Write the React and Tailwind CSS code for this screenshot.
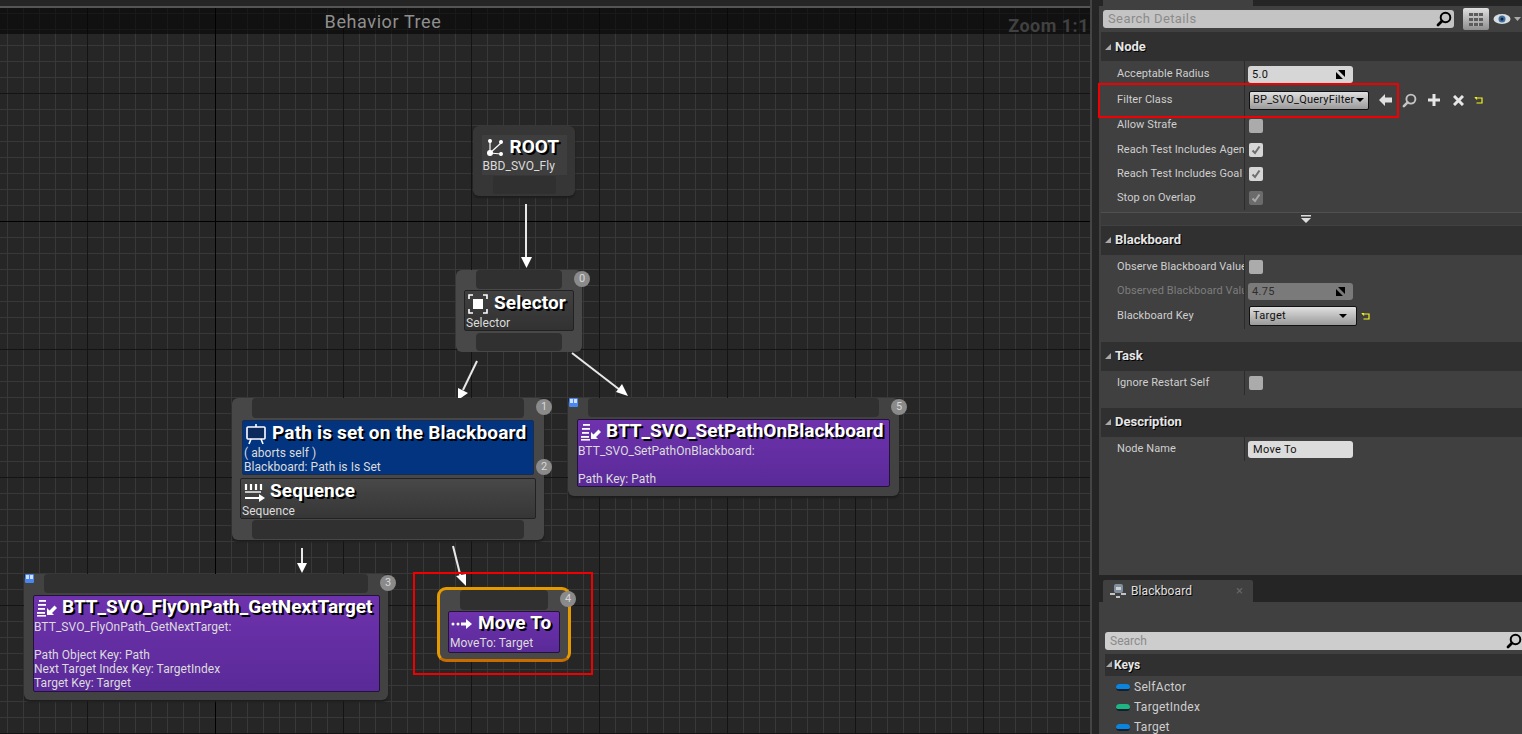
function Badge({ n, className }) {
  return (
    <div className={`absolute z-10 w-4 h-4 rounded-full bg-[#8a8a8a] text-[#d8d8d8] text-[11px] leading-4 text-center ${className}`}>
      {n}
    </div>
  )
}

function Title({ children, className = '' }) {
  return (
    <span className={`relative font-bold text-[19px] leading-[22px] text-white whitespace-nowrap [text-shadow:2px_2px_0_#000] ${className}`}>
      {children}
    </span>
  )
}

function Sub({ children }) {
  return <div className="text-[12px] leading-[14px] tracking-[0.05px] text-[#dcdcdc] whitespace-nowrap">{children}</div>
}

const SaveIcon = ({ className }) => (
  <svg className={`absolute ${className}`} width="9" height="9" viewBox="0 0 9 9">
    <rect width="9" height="9" rx="1" fill="#4a86f0" />
    <rect x="1" y="1" width="3" height="4" fill="#cfe0ff" />
    <rect x="5" y="1" width="3" height="4" fill="#cfe0ff" />
  </svg>
)

const RootIcon = () => (
  <svg width="18" height="18" viewBox="0 0 18 18" fill="white" stroke="white" strokeWidth="1.2">
    <line x1="4" y1="3" x2="4" y2="15" />
    <line x1="4" y1="15" x2="15" y2="5" />
    <line x1="4" y1="15" x2="15" y2="16" />
    <circle cx="4" cy="3" r="1.4" />
    <circle cx="4" cy="15" r="2.4" />
    <circle cx="15" cy="4" r="1.4" />
    <circle cx="15" cy="16" r="1.4" />
  </svg>
)

const SelectorIcon = () => (
  <svg width="20" height="20" viewBox="0 0 20 20" fill="none" stroke="white" strokeWidth="1.6">
    <rect x="5" y="5" width="10" height="10" fill="white" stroke="none" />
    <path d="M1 5V1h4M15 1h4v4M19 15v4h-4M5 19H1v-4" />
  </svg>
)

const DecoratorIcon = () => (
  <svg width="22" height="22" viewBox="0 0 22 22" fill="#0c2a5c" stroke="white" strokeWidth="1.6">
    <rect x="2" y="4" width="18" height="12" rx="1" />
    <path d="M11 1v3M6 16l-2 5M16 16l2 5" fill="none" />
  </svg>
)

const SequenceIcon = () => (
  <svg width="22" height="20" viewBox="0 0 22 20" fill="white" stroke="white">
    <path d="M2 2v6M7 2v6M12 2v6M17 2v6" strokeWidth="2.2" fill="none" />
    <path d="M1 10h16" strokeWidth="1.4" fill="none" />
    <path d="M1 15h14v-3l6 4-6 4v-3H1z" stroke="none" />
  </svg>
)

const TaskIcon = () => (
  <svg width="22" height="18" viewBox="0 0 22 18" fill="white">
    <rect x="3" y="1" width="7" height="1.8" />
    <rect x="2" y="5" width="8" height="1.8" />
    <rect x="2" y="9" width="7" height="1.8" />
    <rect x="1" y="13" width="8" height="1.8" />
    <rect x="1" y="16" width="9" height="1.6" />
    <path d="M11 16V9l2.500 2.500L18.500 6.500 21 9l-5 5 2 2z" />
  </svg>
)

const MoveIcon = () => (
  <svg width="22" height="12" viewBox="0 0 22 12" fill="white">
    <circle cx="2" cy="6" r="1.5" />
    <circle cx="7" cy="6" r="1.5" />
    <rect x="10" y="4.500" width="6" height="3" />
    <path d="M15 1l6 5-6 5z" />
  </svg>
)

const SearchIcon = ({ color = '#000', size = 16 }) => (
  <svg width={size} height={size} viewBox="0 0 16 16" fill="none" stroke={color}>
    <circle cx="9.500" cy="6.500" r="4.800" strokeWidth="2" />
    <path d="M6 10l-4 4" strokeWidth="2.800" strokeLinecap="round" />
  </svg>
)

const ResetIcon = () => (
  <svg width="9" height="9" viewBox="0 0 9 9" fill="none" stroke="#f4f41e" strokeWidth="1.200">
    <path d="M3 1.500H1.500L3 3.500" />
    <path d="M1.500 2H8v5H2.500" />
  </svg>
)

const ResizeIcon = () => (
  <svg className="absolute right-[8px] top-[4px]" width="9" height="9" viewBox="0 0 9 9" fill="#000">
    <path d="M2 0h7v7zM0 2v7h7z" />
  </svg>
)

function Caret() {
  return <div className="w-0 h-0 border-l-[4px] border-r-[4px] border-t-[4px] border-l-transparent border-r-transparent border-t-black" />
}

function Check({ state }) {
  if (state === 'off') return <div className="w-[14px] h-[14px] ml-px rounded-[2px] bg-[#ababab]" />
  const dis = state === 'disabled'
  return (
    <div className={`w-[14px] h-[14px] ml-px rounded-[2px] flex items-center justify-center ${dis ? 'bg-[#6b6b6b]' : 'bg-[#d6d6d6]'}`}>
      <svg width="10" height="10" viewBox="0 0 10 10" fill="none" stroke={dis ? '#a8a8a8' : '#6e6e6e'} strokeWidth="2">
        <path d="M1.500 5.500l2.500 2.500L8.500 1.500" />
      </svg>
    </div>
  )
}

function Row({ label, h = 'h-6', dim, children }) {
  return (
    <div className={`flex items-center ${h}`}>
      <div className={`w-[144px] pl-[16px] shrink-0 overflow-hidden whitespace-nowrap text-[11px] tracking-[0.08px] border-r border-[#2c2c2c] h-full flex items-center ${dim ? 'text-[#7d7d7d]' : 'text-[#cfcfcf]'}`}>
        {label}
      </div>
      <div className="pl-[3px] flex items-center">{children}</div>
    </div>
  )
}

function SectionHead({ title, pb = 'pb-[2px]' }) {
  return (
    <div className={`h-[29px] bg-[#303030] flex items-center ${pb}`}>
      <div className="w-0 h-0 ml-[4px] mr-[4px] mt-[1px] border-b-[6px] border-l-[6px] border-b-[#a8a8a8] border-l-transparent" />
      <span className="text-[13px] font-bold text-[#e6e6e6] [text-shadow:1px_1px_0_#000]">{title}</span>
      <div className="ml-auto" />
    </div>
  )
}

function NumberBox({ value, dim }) {
  return (
    <div className={`relative w-[105px] h-[17px] rounded-[3px] text-[11px] leading-[17px] pl-[4px] tracking-[0.3px] ${dim ? 'bg-[#7a7a7a] text-[#2e2e2e]' : 'bg-[#d6d6d6] text-[#111]'}`}>
      {value}
      <ResizeIcon />
    </div>
  )
}

function KeyRow({ label, color }) {
  return (
    <div className="h-5 flex items-center pl-[11px] gap-[4px] text-[12px] tracking-[0.3px] text-[#cfcfcf]">
      <div className={`w-[14px] h-[7px] rounded-full border-b-2 border-[#10202c] ${color}`} />
      {label}
    </div>
  )
}

function NodeSection() {
  return (
    <div className="ml-[2px]">
      <SectionHead title="Node" pb="" />
      <Row label="Acceptable Radius" h="h-[26px]"><NumberBox value="5.0" /></Row>
      <Row label="Filter Class" h="h-[26px]">
        <div className="relative flex items-center">
          <div className="w-[120px] h-[19px] ml-px border border-[#111] rounded-[2px] bg-gradient-to-b from-[#e0e0e0] to-[#9a9a9a] flex items-center justify-between pl-[3px] pr-[4px] text-[11px] text-[#111] tracking-[0.2px]">
            BP_SVO_QueryFilter <Caret />
          </div>
          <svg className="ml-[10px]" width="14" height="12" viewBox="0 0 14 12" fill="#e0e0e0"><path d="M0 6l6-6v3.500h7v5H6V12z" /></svg>
          <div className="ml-[6px] flex items-center justify-center w-[20px]"><SearchIcon color="#c4c4c4" size={15} /></div>
          <svg className="ml-[9px]" width="12" height="12" viewBox="0 0 12 12" fill="#e6e6e6"><path d="M4.500 0h3v4.500H12v3H7.500V12h-3V7.500H0v-3h4.500z" /></svg>
          <svg className="ml-[13px]" width="11" height="11" viewBox="0 0 11 11" stroke="#e6e6e6" strokeWidth="3"><path d="M1 1l9 9M10 1l-9 9" /></svg>
          <div className="ml-[10px]"><ResetIcon /></div>
        </div>
      </Row>
      <Row label="Allow Strafe" h="h-[25px]"><Check state="off" /></Row>
      <Row label="Reach Test Includes Agent Radius"><Check state="on" /></Row>
      <Row label="Reach Test Includes Goal Radius"><Check state="on" /></Row>
      <Row label="Stop on Overlap"><Check state="disabled" /></Row>
      {/* red highlight over the Filter Class row */}
      <div className="absolute left-[-1px] top-[83px] w-[301px] h-[35px] border-2 border-[#f00000] pointer-events-none" />
    </div>
  )
}

export default function App() {
  return (
    <div className="w-[1522px] h-[734px] overflow-hidden flex bg-[#252525] font-['Roboto',sans-serif]">
      {/* graph side */}
      <div className="w-[1092px] shrink-0 flex flex-col border-r-2 border-[#444]">
        <div className="h-[6px] bg-[#252525] shrink-0" />
        <div className="h-[2px] bg-[#555] shrink-0" />
        <div className="relative flex-1 overflow-hidden bg-[#262626] bg-[linear-gradient(90deg,#141414_1px,transparent_1px),linear-gradient(#141414_1px,transparent_1px),linear-gradient(90deg,#383838_1px,transparent_1px),linear-gradient(#383838_1px,transparent_1px)] bg-[size:128px_128px,128px_128px,16px_16px,16px_16px] bg-[position:87px_85px,87px_85px,7px_5px,7px_5px]">
          <div className="absolute left-[215px] top-0 bottom-0 w-px bg-black" />
          <div className="absolute top-[213px] left-0 right-0 h-px bg-black" />
          <div className="absolute inset-x-0 top-0 h-[26px] bg-black/55" />
          <div className="absolute top-0 left-0 w-[766px] h-[26px] flex items-center justify-center text-[18px] text-[#8f8f8f] tracking-[0.6px]">
            Behavior Tree
          </div>
          <div className="absolute top-[5px] right-px text-[18px] font-bold text-[#414141] tracking-[0.5px] leading-[26px]">Zoom 1:1</div>
        </div>
      </div>

      {/* nodes and wires sit on the free canvas */}
      <div className="absolute inset-0 pointer-events-none overflow-hidden w-[1092px]">
        <svg className="absolute inset-0" width="1092" height="734" fill="white" stroke="#e8e8e8" strokeWidth="2">
          <line x1="526" y1="204" x2="526" y2="258" />
          <path d="M521 257h11l-5.500 11z" stroke="none" />
          <line x1="477" y1="361" x2="463" y2="390" />
          <path d="M458 388l10 5-10 7z" stroke="none" />
          <line x1="572" y1="353" x2="620" y2="390" />
          <path d="M622 384l-6 8 12 4z" stroke="none" />
          <line x1="302" y1="548" x2="302" y2="564" />
          <path d="M297 563h10l-5 10z" stroke="none" />
          <line x1="453" y1="546" x2="461" y2="578" />
          <path d="M456 576l10-2-0 12z" stroke="none" />
        </svg>

        {/* ROOT */}
        <div className="absolute left-[473px] top-[126px] w-[102px] h-[70px] rounded-[6px] bg-[#363636] shadow-[0_2px_2px_#1c1c1c] flex flex-col items-center pt-[9px]">
          <div className="w-[85px] h-[40px] bg-[#3e3e3e] pl-px">
            <div className="flex items-center gap-[6px] h-[24px] pl-[3px]">
              <RootIcon />
              <Title>ROOT</Title>
            </div>
            <Sub>BBD_SVO_Fly</Sub>
          </div>
          <div className="w-[63px] h-[18px] mt-px rounded-[3px] bg-[#303030]" />
        </div>

        {/* Selector */}
        <div className="absolute left-[456px] top-[270px] w-[126px] h-[82px] rounded-[6px] bg-[#484848] flex flex-col items-center">
          <div className="w-[86px] h-[19px] rounded-[4px] bg-[#303030]" />
          <div className="w-[110px] h-[41px] mt-px border border-[#222] rounded-[2px] bg-gradient-to-b from-[#404040] to-[#323232] pl-px self-start ml-[8px]">
            <div className="flex items-center gap-[6px] h-[25px] pl-[2px]">
              <SelectorIcon />
              <Title className="-top-px tracking-[0.1px]">Selector</Title>
            </div>
            <Sub>Selector</Sub>
          </div>
          <div className="w-[86px] h-[18px] mt-[2px] rounded-[4px] bg-[#303030]" />
          <Badge n="0" className="left-[118px] top-[1px]" />
        </div>

        {/* Composite with decorator */}
        <div className="absolute left-[232px] top-[398px] w-[312px] h-[142px] rounded-[6px] bg-[#474747] shadow-[0_2px_2px_#1c1c1c] flex flex-col items-center">
          <div className="w-[272px] h-[20px] rounded-[4px] bg-[#303030]" />
          <div className="w-[292px] h-[55px] mt-[2px] border border-[#1b2c4c] rounded-[2px] bg-[#023480] pl-px">
            <div className="flex items-center gap-[5px] h-[25px] pl-px">
              <DecoratorIcon />
              <Title className="-top-px tracking-[0.17px]">Path is set on the Blackboard</Title>
            </div>
            <Sub>( aborts self )</Sub>
            <Sub>Blackboard: Path is Is Set</Sub>
          </div>
          <div className="w-[296px] h-[41px] mt-[3px] border border-[#222] rounded-[2px] bg-gradient-to-b from-[#484848] to-[#363636] pl-px">
            <div className="flex items-center gap-[4px] h-[25px] pl-[2px]">
              <SequenceIcon />
              <Title className="-top-px tracking-[0.1px]">Sequence</Title>
            </div>
            <Sub>Sequence</Sub>
          </div>
          <div className="w-[272px] h-[19px] mt-px rounded-[4px] bg-[#303030]" />
          <Badge n="1" className="left-[304px] top-[1px]" />
          <Badge n="2" className="left-[304px] top-[61px]" />
        </div>

        {/* SetPath task */}
        <div className="absolute left-[568px] top-[398px] w-[331px] h-[98px] rounded-[6px] bg-[#424242] shadow-[0_2px_2px_#1c1c1c] flex flex-col items-center">
          <div className="w-[291px] h-[19px] rounded-[4px] bg-[#303030]" />
          <div className="w-[313px] h-[68px] mt-[2px] border border-[#24123c] rounded-[2px] bg-gradient-to-b from-[#6e32ad] to-[#5a2a98]">
            <div className="flex items-center gap-[4px] h-[24px] pl-[2px]">
              <TaskIcon />
              <Title className="-top-px">BTT_SVO_SetPathOnBlackboard</Title>
            </div>
            <Sub>BTT_SVO_SetPathOnBlackboard:</Sub>
            <Sub>&nbsp;</Sub>
            <Sub>Path Key: Path</Sub>
          </div>
          <Badge n="5" className="left-[323px] top-px" />
        </div>
        <SaveIcon className="left-[569px] top-[398px]" />

        {/* GetNextTarget task */}
        <div className="absolute left-[24px] top-[574px] w-[364px] h-[126px] rounded-[6px] bg-[#424242] shadow-[0_2px_2px_#1c1c1c] flex flex-col items-center">
          <div className="w-[324px] h-[19px] rounded-[4px] bg-[#303030]" />
          <div className="w-[347px] h-[97px] mt-[2px] border border-[#24123c] rounded-[2px] bg-gradient-to-b from-[#6e32ad] to-[#5a2a98] self-start ml-[9px]">
            <div className="flex items-center gap-[4px] h-[24px] pl-[2px]">
              <TaskIcon />
              <Title className="-top-px">BTT_SVO_FlyOnPath_GetNextTarget</Title>
            </div>
            <Sub>BTT_SVO_FlyOnPath_GetNextTarget:</Sub>
            <Sub>&nbsp;</Sub>
            <Sub>Path Object Key: Path</Sub>
            <Sub>Next Target Index Key: TargetIndex</Sub>
            <Sub>Target Key: Target</Sub>
          </div>
          <Badge n="3" className="left-[356px] top-px" />
        </div>
        <SaveIcon className="left-[25px] top-[574px]" />

        {/* Move To, selected */}
        <div className="absolute left-[437px] top-[587px] w-[134px] h-[75px] rounded-[9px] border-[3px] border-[#e59a00] border-b-[#c86c00] bg-[#484848] flex flex-col items-center">
          <div className="w-[88px] h-[20px] rounded-[4px] bg-[#303030]" />
          <div className="w-[112px] h-[42px] mt-px border border-[#24123c] rounded-[2px] bg-gradient-to-b from-[#6e32ad] to-[#5a2a98] pl-px self-start ml-[8px]">
            <div className="flex items-center gap-[5px] h-[24px] pl-px">
              <MoveIcon />
              <Title className="-top-px tracking-[0.2px]">Move To</Title>
            </div>
            <Sub>MoveTo: Target</Sub>
          </div>
          <Badge n="4" className="left-[120px] top-[1px]" />
        </div>
        <div className="absolute left-[413px] top-[572px] w-[180px] h-[103px] border-2 border-[#f00000]" />
      </div>

      {/* gutter + right panels */}
      <div className="flex-1 ml-[7px] flex flex-col min-w-0 relative">
        {/* Details */}
        <div className="h-[575px] shrink-0 flex flex-col bg-[#404040]">
          <div className="h-[6px] bg-[#252525] shrink-0 flex pl-[4px]">
            <div className="w-[150px] bg-[#404040]" />
          </div>
          <div className="h-[26px] shrink-0 flex items-center pl-[4px]">
            <div className="relative w-[351px] h-[18px] rounded-[3px] bg-[#c4c4c4] text-[13px] leading-[18px] pl-[5px] text-[#8b8b8b] tracking-[0.4px]">
              Search Details
              <div className="absolute right-[2px] top-[1px]"><SearchIcon /></div>
            </div>
            <div className="w-[26px] h-[22px] ml-[9px] rounded-[2px] bg-gradient-to-b from-[#e0e0e0] to-[#8f8f8f] flex items-center justify-center">
              <svg width="14" height="13" viewBox="0 0 14 13" fill="#5c5c5c">
                <path d="M0 0h14v3H0zM0 5h14v3H0zM0 10h14v3H0z" />
                <path d="M4 0h1v13H4zM9 0h1v13H9z" fill="#b5b5b5" />
              </svg>
            </div>
            <svg className="ml-[4px]" width="29" height="12" viewBox="0 0 29 12">
              <ellipse cx="9" cy="6" rx="8.500" ry="5" fill="#d8dde2" />
              <circle cx="9" cy="6" r="3.500" fill="#3f6ea0" />
              <circle cx="9" cy="6" r="1.500" fill="#10243a" />
              <path d="M21 4h7l-3.500 4z" fill="#aaa" />
            </svg>
          </div>

          <NodeSection />

          <div className="h-[1px] mt-[2px] bg-[#505050] ml-[2px]" />
          <div className="h-[12px] ml-[2px] bg-[#3a3a3a] flex items-center justify-center pr-[12px]">
            <svg width="10" height="8" viewBox="0 0 10 8" fill="#ddd">
              <path d="M0 0h10v1.500H0zM0 3h10L5 8z" />
            </svg>
          </div>
          <div className="h-px" />

          <div className="ml-[2px]">
            <SectionHead title="Blackboard" />
            <div className="h-[85px]">
              <Row label="Observe Blackboard Value"><Check state="off" /></Row>
              <Row label="Observed Blackboard Value" dim><NumberBox value="4.75" dim /></Row>
              <Row label="Blackboard Key" h="h-[26px]">
                <div className="w-[108px] h-[20px] ml-px border border-[#111] rounded-[2px] bg-gradient-to-b from-[#e0e0e0] to-[#9a9a9a] flex items-center justify-between pl-[3px] pr-[9px] text-[11px] text-[#111] tracking-[0.3px]">
                  Target <Caret />
                </div>
                <div className="ml-[4px]"><ResetIcon /></div>
              </Row>
            </div>
            <div className="h-[2px]" />
            <SectionHead title="Task" />
            <div className="h-[35px]">
              <Row label="Ignore Restart Self"><Check state="off" /></Row>
            </div>
            <div className="h-[2px]" />
            <SectionHead title="Description" />
            <Row label="Node Name">
              <div className="w-[105px] h-[17px] rounded-[3px] bg-[#dcdcdc] text-[11px] leading-[17px] pl-[5px] text-[#111] tracking-[0.3px]">Move To</div>
            </Row>
          </div>
        </div>

        {/* Blackboard panel */}
        <div className="h-[27px] shrink-0 bg-[#252525] pt-[5px] pl-[4px]">
          <div className="w-[150px] h-[22px] bg-[#404040] rounded-t-[2px] flex items-center pl-[7px] gap-[5px] text-[12px] tracking-[0.1px] text-[#e0e0e0] [text-shadow:1px_1px_0_#000]">
            <svg width="16" height="16" viewBox="0 0 16 16">
              <rect x="4" y="1" width="9" height="9" rx="2" fill="#7f8fa0" />
              <rect x="6" y="4" width="5" height="3" fill="#d0d0d0" />
              <path d="M0 11h5M11 11h5M6 14h4" stroke="#eee" strokeWidth="1.500" />
            </svg>
            Blackboard
            <span className="ml-auto mr-[10px] text-[13px] text-[#666] [text-shadow:none]">×</span>
          </div>
        </div>
        <div className="flex-1 bg-[#404040] pt-[30px] pl-[6px]">
          <div className="relative h-[18px] rounded-l-[3px] bg-[#cdcdcd] text-[12px] leading-[18px] pl-[5px] text-[#8b8b8b]">
            Search
            <div className="absolute right-0 top-[1px]"><SearchIcon /></div>
          </div>
          <div className="h-[22px] mt-[4px] bg-[#303030] flex items-center pl-px">
            <div className="w-0 h-0 mr-[2px] mb-[2px] border-b-[6px] border-l-[6px] border-b-[#a8a8a8] border-l-transparent" />
            <span className="text-[12px] font-bold text-[#e6e6e6] [text-shadow:1px_1px_0_#000]">Keys</span>
          </div>
          <div className="pt-px">
            <KeyRow label="SelfActor" color="bg-[#0a84dc]" />
            <KeyRow label="TargetIndex" color="bg-[#1fb583]" />
            <KeyRow label="Target" color="bg-[#0a84dc]" />
          </div>
        </div>
      </div>
    </div>
  )
}
